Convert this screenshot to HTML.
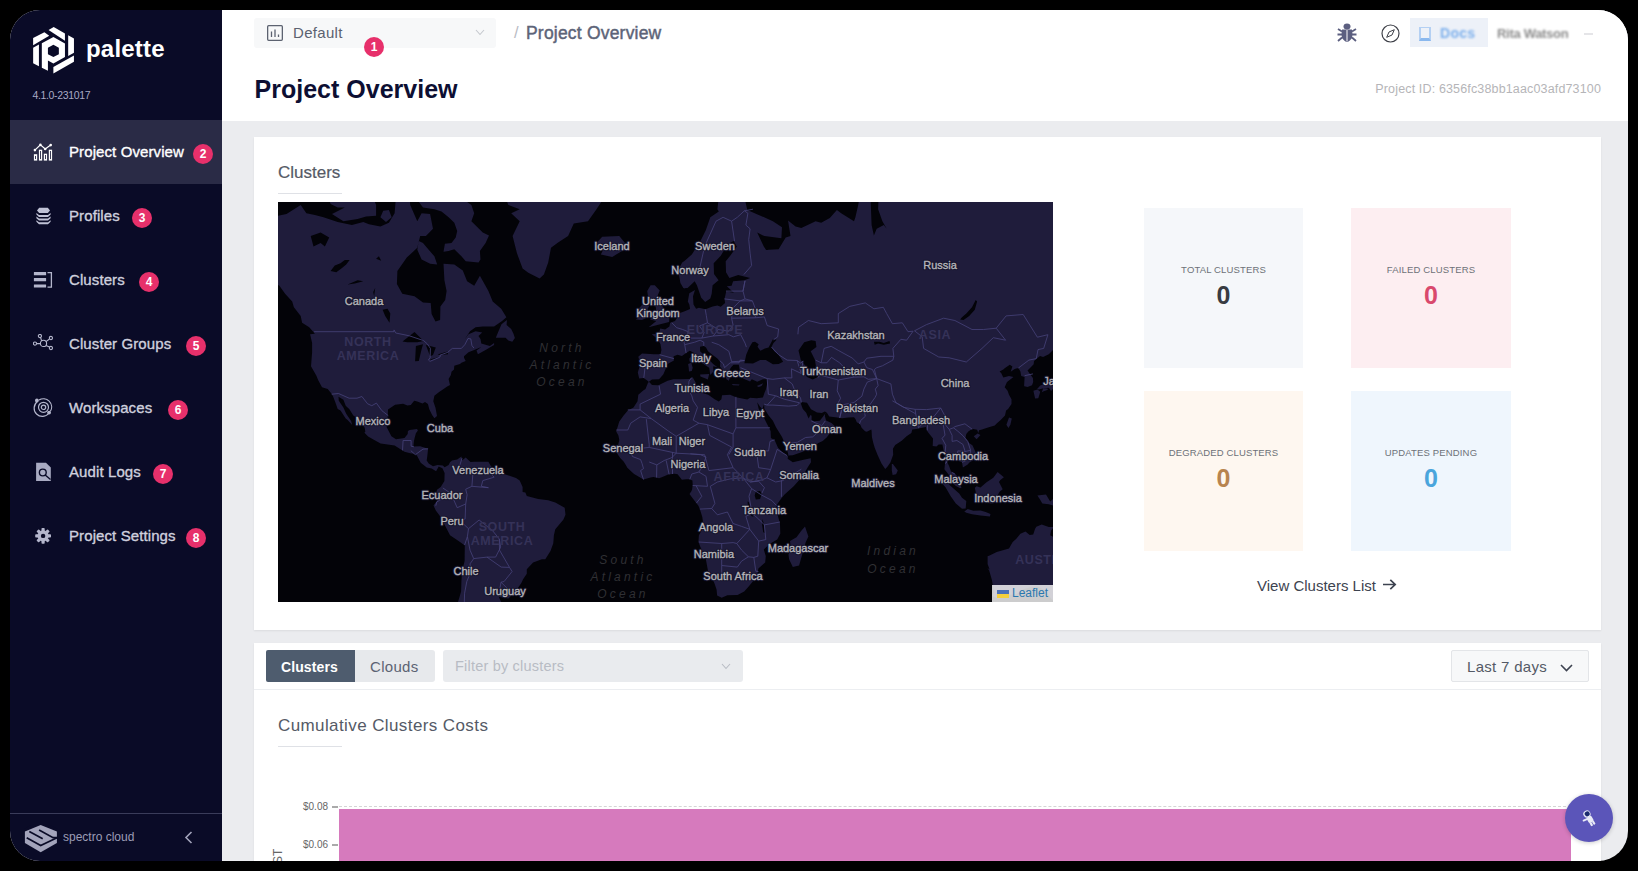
<!DOCTYPE html>
<html><head><meta charset="utf-8">
<style>
*{margin:0;padding:0;box-sizing:border-box}
html,body{width:1638px;height:871px;overflow:hidden;background:#000;font-family:"Liberation Sans",sans-serif}
.a{position:absolute}
#win{position:absolute;left:10px;top:10px;width:1618px;height:851px;border-radius:30px;overflow:hidden;background:#ebecef}
#side{position:absolute;left:0;top:0;width:212px;height:851px;background:#0a0b27}
#side .nav{position:absolute;left:0;width:212px;height:64px}
#side .nav.act{background:#2a2b46}
#side .nav .t{position:absolute;left:59px;top:0;line-height:64px;font-size:15px;color:#cfd0de;white-space:nowrap;letter-spacing:0.1px;-webkit-text-stroke:0.35px currentColor}
#side .nav.act .t{color:#fff}
#side .nav svg{position:absolute;left:23px;top:22px}
.badge{position:absolute;width:20px;height:20px;border-radius:50%;background:#e7306b;color:#fff;font-size:12px;font-weight:bold;text-align:center;line-height:20px}
#hdr{position:absolute;left:212px;top:0;width:1406px;height:111px;background:#fff}
.card{position:absolute;background:#fff;box-shadow:0 1px 2px rgba(0,0,0,0.07)}
.ct text{fill:#353258;font-size:12.5px;font-weight:bold;letter-spacing:0.6px}
.ot text{fill:#303034;font-size:12px;font-style:italic;letter-spacing:3.2px}
.lt text{fill:#b9b9bd;font-size:11px;stroke:#16142c;stroke-width:2.4px;stroke-linejoin:round}
.lt2 text{fill:#b5b5b9;font-size:11px;stroke:#b5b5b9;stroke-width:0.35px}
.tile{position:absolute;width:160px;height:160px;text-align:center}
.tile .l{position:absolute;left:0;width:100%;top:56px;font-size:9.5px;color:#6d7178;letter-spacing:0.15px}
.tile .n{position:absolute;left:0;width:100%;top:72.5px;font-size:25px;color:#333;font-weight:bold}
</style></head><body>
<div id="win">
 <div id="side">
  <svg class="a" style="left:18px;top:12px" width="52" height="56" viewBox="0 0 809 871"><g fill="#fff">
<polygon points="80,250 255,160 330,215 80,360"/>
<polygon points="320,125 400,78 575,180 575,290"/>
<polygon points="625,205 715,255 715,480 625,530"/>
<polygon points="395,700 715,520 715,620 395,800"/>
<polygon points="80,400 170,350 170,690 80,640"/>
<path fill-rule="evenodd" d="M215 330 L395 235 L575 335 L575 545 L395 645 L310 600 L310 760 L215 710 Z M395 355 L480 400 L480 500 L395 545 L310 500 L310 400 Z"/>
</g></svg>
  <div class="a" style="left:76px;top:25px;font-size:24px;font-weight:bold;color:#fff;letter-spacing:0.2px">palette</div>
  <div class="a" style="left:22.5px;top:78.5px;font-size:10.5px;color:#a9aac4;letter-spacing:-0.35px">4.1.0-231017</div>

  <div class="nav act" style="top:110px"><svg width="20" height="20" viewBox="0 0 20 20"><g fill="none" stroke="#fff" stroke-width="1.2"><path d="M1.9 8.1 L7.4 2.9 L12.2 7 L17.7 3.1"/><rect x="1.5" y="12.8" width="2.1" height="5.2"/><rect x="6.5" y="8.3" width="2.1" height="9.7"/><rect x="11.4" y="12.3" width="2.1" height="5.7"/><rect x="16.4" y="8.3" width="2.1" height="9.7"/></g><g fill="#fff"><circle cx="1.9" cy="8.1" r="1.3"/><circle cx="7.4" cy="2.9" r="1.3"/><circle cx="12.2" cy="7" r="1.3"/><circle cx="17.7" cy="3.1" r="1.3"/></g></svg><div class="t">Project Overview</div><div class="badge" style="left:183px;top:23.5px">2</div></div>
  <div class="nav" style="top:174px"><svg width="20" height="20" viewBox="0 0 20 20"><g fill="#c0c2d6"><path d="M6.2 1.8 H14.8 L17 4.4 L14.8 7 H6.2 L4 4.4 Z"/><path d="M3.4 7 L6 9 H15 L17.6 7 V8.6 L15 11 H6 L3.4 8.6 Z"/><path d="M3.4 10.6 L6 12.6 H15 L17.6 10.6 V12.2 L15 14.6 H6 L3.4 12.2 Z"/><path d="M3.4 14.2 L6 16.2 H15 L17.6 14.2 V15.8 L15 18.2 H6 L3.4 15.8 Z"/></g></svg><div class="t">Profiles</div><div class="badge" style="left:122px;top:23.5px">3</div></div>
  <div class="nav" style="top:238px"><svg width="20" height="20" viewBox="0 0 20 20"><g fill="#b4b6cc"><rect x="0.9" y="2" width="12.2" height="3.2" rx="0.3"/><rect x="0.9" y="8" width="12.2" height="3.2" rx="0.3"/><rect x="0.9" y="14.4" width="12.2" height="3.2" rx="0.3"/></g><path d="M14.5 2.6 H18.4 V17.2 H14.5" fill="none" stroke="#b4b6cc" stroke-width="1.3"/></svg><div class="t">Clusters</div><div class="badge" style="left:129px;top:23.5px">4</div></div>
  <div class="nav" style="top:302px"><svg width="20" height="20" viewBox="0 0 20 20"><g fill="none" stroke="#b4b6cc" stroke-width="1.1"><circle cx="10.5" cy="9.4" r="3.1"/><circle cx="2" cy="9.6" r="1.6"/><circle cx="6.9" cy="2" r="1.6"/><circle cx="17.9" cy="4" r="1.6"/><circle cx="17.9" cy="14" r="1.6"/><path d="M3.6 9.6 H7.4 M8.6 6.9 L7.6 3.5 M13 7.6 L16.5 5 M13 11.5 L16.5 13"/></g></svg><div class="t">Cluster Groups</div><div class="badge" style="left:176px;top:23.5px">5</div></div>
  <div class="nav" style="top:366px"><svg width="20" height="20" viewBox="0 0 20 20"><g fill="none" stroke="#b4b6cc" stroke-width="1.2"><path d="M4.5 3.6 A8.2 8.2 0 1 0 16 15"/><path d="M6 2.1 A8.2 8.2 0 0 1 17.4 13.3"/><circle cx="10.5" cy="9.3" r="5"/><circle cx="10.5" cy="9.3" r="2.2"/></g><g fill="#b4b6cc"><circle cx="3.9" cy="2.4" r="1.9"/><circle cx="16.1" cy="14.6" r="1.9"/></g></svg><div class="t">Workspaces</div><div class="badge" style="left:158px;top:23.5px">6</div></div>
  <div class="nav" style="top:430px"><svg width="20" height="20" viewBox="0 0 20 20"><path d="M3.1 0.8 H13 L17.8 5.6 V18.9 H3.1 Z" fill="#a9abc2"/><circle cx="9.8" cy="10.5" r="3.4" fill="none" stroke="#0a0b27" stroke-width="1.4"/><path d="M12.2 13 L17.5 17.5" stroke="#0a0b27" stroke-width="1.4"/></svg><div class="t">Audit Logs</div><div class="badge" style="left:143px;top:23.5px">7</div></div>
  <div class="nav" style="top:494px"><svg width="20" height="20" viewBox="0 0 20 20"><g fill="#b4b6cc" transform="translate(10.1 9.9)"><circle r="5.6"/><g id="teeth"><rect x="-1.6" y="-7.9" width="3.2" height="3.5" rx="0.8"/><rect x="-1.6" y="4.4" width="3.2" height="3.5" rx="0.8"/><rect x="-7.9" y="-1.6" width="3.5" height="3.2" rx="0.8"/><rect x="4.4" y="-1.6" width="3.5" height="3.2" rx="0.8"/></g><g transform="rotate(45)"><rect x="-1.6" y="-7.9" width="3.2" height="3.5" rx="0.8"/><rect x="-1.6" y="4.4" width="3.2" height="3.5" rx="0.8"/><rect x="-7.9" y="-1.6" width="3.5" height="3.2" rx="0.8"/><rect x="4.4" y="-1.6" width="3.5" height="3.2" rx="0.8"/></g><circle r="2.2" fill="#0a0b27"/></g></svg><div class="t">Project Settings</div><div class="badge" style="left:176px;top:23.5px">8</div></div>

  <div class="a" style="left:0;top:803px;width:212px;height:1px;background:#3a3c5a"></div>
  <svg class="a" style="left:14px;top:814px" width="34" height="30" viewBox="24 824 34 30"><polygon points="40.7,825 56.9,831.5 56.9,843 40.7,852.2 24.9,843 24.9,831.5" fill="#a3a4bb"/><g fill="none" stroke="#0a0b27" stroke-width="1.7" stroke-linecap="butt"><path d="M39.1 830 L53.1 837.7 L58 837.7"/><path d="M29.3 831.5 L42.7 838.8"/><path d="M26.7 837.7 L40.7 845.5 L57 837.7"/></g><path d="M24 829 L31 825 L24 825Z M58 829 L50 825 L58 825Z" fill="#0a0b27"/></svg>
  <div class="a" style="left:53px;top:820px;font-size:12px;color:#9c9db6">spectro cloud</div>
  <svg class="a" style="left:174px;top:821px" width="9" height="13" viewBox="0 0 9 13"><path d="M7.5 1 L2 6.5 L7.5 12" fill="none" stroke="#a3a4bb" stroke-width="1.6"/></svg>
 </div>

 <div id="hdr">
  <div class="a" style="left:32px;top:8px;width:242px;height:30px;background:#f7f8f9;border-radius:3px"></div>
  <svg class="a" style="left:45px;top:15px" width="16" height="16" viewBox="0 0 16 16"><g fill="none" stroke="#5c6270" stroke-width="1.3"><rect x="0.65" y="0.65" width="14.7" height="14.7" rx="1"/><path d="M4.5 12 V6.5 M8 12 V4.5 M11.5 12 V9.5"/></g></svg>
  <div class="a" style="left:71px;top:14px;font-size:15px;color:#5b6270;letter-spacing:0.3px">Default</div>
  <svg class="a" style="left:253px;top:19px" width="10" height="7" viewBox="0 0 10 7"><path d="M1 1 L5 5.5 L9 1" fill="none" stroke="#c5c8ce" stroke-width="1.1"/></svg>
  <div class="badge" style="left:142px;top:26.5px">1</div>
  <div class="a" style="left:292px;top:13px;font-size:16.5px;color:#b9bcc4">/</div>
  <div class="a" style="left:304px;top:12.5px;font-size:17.5px;color:#5d6478;-webkit-text-stroke:0.45px #5d6478;letter-spacing:0.2px">Project Overview</div>
  <div class="a" style="left:32.6px;top:64.7px;font-size:25px;color:#0d0f33;font-weight:bold">Project Overview</div>
  <div class="a" style="left:1153.3px;top:71.6px;font-size:12.5px;color:#b5b5b8;letter-spacing:0.15px">Project ID: 6356fc38bb1aac03afd73100</div>
  <svg class="a" style="left:1115px;top:13px" width="20" height="20" viewBox="0 0 20 20"><g fill="#5c5f80"><ellipse cx="10" cy="3.5" rx="3.5" ry="3"/><path d="M5 6.5 H15 Q16 12 15 15 Q12 19 10 19 Q8 19 5 15 Q4 12 5 6.5Z"/><path d="M1 6 L5 8.5 M19 6 L15 8.5 M0.5 11.5 H5 M19.5 11.5 H15 M1 18 L5 14.5 M19 18 L15 14.5" stroke="#5c5f80" stroke-width="1.8"/></g><path d="M10 7 V18.5" stroke="#fff" stroke-width="1"/></svg>
  <svg class="a" style="left:1159px;top:14px" width="19" height="19" viewBox="0 0 19 19"><circle cx="9.5" cy="9.5" r="8.5" fill="none" stroke="#3e4048" stroke-width="1.2"/><path d="M13.3 5.7 L11 11 L5.7 13.3 L8 8 Z" fill="none" stroke="#3e4048" stroke-width="1"/></svg>
  <div class="a" style="left:1188px;top:8px;width:78px;height:29px;background:#edf1f8"></div>
  <div class="a" style="left:1197px;top:17px;width:12px;height:14px;border:2.5px solid #b4d0f3;border-top-width:1px;border-bottom:3px solid #8ab8ee;filter:blur(0.5px)"></div>
  <div class="a" style="left:1218px;top:15px;font-size:14px;color:#7db0ec;font-weight:bold;filter:blur(0.8px);letter-spacing:0.3px">Docs</div>
  <div class="a" style="left:1275px;top:16px;font-size:13px;color:#8d8d8d;font-weight:bold;filter:blur(1px);letter-spacing:-0.3px">Rita Watson</div>
  <div class="a" style="left:1362px;top:23px;width:9px;height:2px;background:#e5e5e8"></div>
 </div>

 <div class="card" style="left:244px;top:127px;width:1347px;height:493px">
  <div class="a" style="left:24px;top:26px;font-size:17px;color:#555a66;-webkit-text-stroke:0.2px #555a66">Clusters</div>
  <div class="a" style="left:24px;top:56px;width:64px;height:1px;background:#dfe1e6"></div>
  <div class="a" style="left:24px;top:65px;width:775px;height:400px;overflow:hidden"><svg width="775" height="400" viewBox="0 0 775 400" style="display:block">
<rect width="775" height="400" fill="#030308"/>
<path d="M-39.9 75.4L-39.9 23.1L-14.3 9.6L-0.0 13.7L8.5 12.1L22.7 3.0L28.4 11.3L36.9 12.9L45.5 15.3L59.7 20.0L73.9 23.1L85.3 20.0L91.0 22.3L102.4 24.6L110.9 20.8L116.6 11.3L118.0 -5.8L122.3 -19.8L130.8 -19.8L132.2 3.0L139.3 19.2L143.6 11.3L152.1 12.1L155.0 26.8L147.9 34.1L142.2 34.1L139.3 45.8L128.8 55.6L119.4 69.0L118.9 82.1L124.3 91.7L136.5 94.3L145.0 100.4L152.7 100.9L153.6 112.0L157.5 119.5L162.1 118.1L162.4 104.4L167.2 97.9L168.6 89.1L166.4 78.2L165.5 61.8L176.3 62.4L184.8 68.4L189.1 79.3L196.2 83.7L201.9 73.7L210.4 89.1L214.7 99.4L223.2 106.8L228.4 115.3L224.1 119.0L216.1 124.4L204.8 124.4L197.6 125.3L192.0 129.2L186.8 137.3L190.5 132.3L197.6 129.2L204.2 130.5L200.5 134.0L202.5 136.9L203.3 141.5L211.9 143.9L216.1 141.1L216.1 143.1L207.6 148.0L199.9 152.3L198.5 148.4L203.3 145.1L196.2 148.0L190.5 150.3L186.0 154.3L186.0 155.8L187.7 158.9L183.4 160.8L182.0 161.9L176.3 163.8L176.0 167.5L173.5 169.7L172.9 173.0L170.6 176.9L172.0 182.9L169.2 184.6L164.9 187.4L161.5 189.8L159.2 191.5L156.4 193.8L155.3 199.2L157.5 205.7L159.0 214.0L156.4 216.2L154.1 213.1L151.3 207.3L149.9 202.1L147.0 200.1L144.5 201.5L139.3 199.5L136.2 198.8L132.8 203.1L129.4 203.4L125.1 201.8L117.1 202.8L110.0 207.6L109.8 213.4L108.6 224.9L113.4 234.3L118.0 237.3L126.5 236.1L129.7 231.9L129.9 228.9L131.7 228.0L139.0 227.1L139.9 228.6L137.9 231.3L136.5 236.4L135.9 239.4L135.4 244.5L142.2 244.2L150.1 246.8L149.3 254.2L148.7 258.5L150.7 261.4L155.0 264.3L159.5 263.1L164.9 263.4L166.6 265.2L170.6 263.1L172.0 260.3L174.0 258.5L179.2 257.6L183.4 254.5L184.3 258.5L183.4 259.1L187.7 255.6L192.5 260.0L196.2 259.7L204.8 259.7L210.4 259.7L213.9 265.7L221.3 270.6L229.8 273.2L238.0 276.0L241.7 278.6L244.6 284.9L244.6 290.0L247.4 290.6L248.8 294.0L260.2 297.1L270.2 298.3L277.3 300.5L286.7 305.7L287.5 312.8L285.3 317.7L277.3 327.3L275.9 333.2L275.3 341.2L272.5 349.0L267.3 357.3L263.9 357.3L255.1 360.4L248.8 367.3L248.8 371.7L245.1 377.2L243.2 381.2L237.5 389.5L230.4 396.4L226.9 396.0L220.7 394.7L223.2 399.9L224.7 414.3L176.3 414.3L177.7 403.4L179.2 402.7L183.1 389.5L183.4 379.5L184.0 369.8L186.6 359.1L186.8 343.6L182.0 340.0L172.0 333.2L167.5 324.4L162.1 314.3L157.8 308.5L155.5 303.4L159.2 298.5L156.7 296.3L159.0 287.7L162.7 284.9L166.4 278.9L166.6 270.9L164.4 266.3L160.7 264.6L158.1 269.2L153.6 266.6L148.7 265.4L142.7 260.8L139.3 254.2L137.6 252.1L132.2 251.2L126.5 249.8L123.7 248.0L116.6 243.6L102.6 241.5L96.7 238.2L90.1 234.6L86.4 230.7L87.3 229.8L86.7 225.8L84.2 222.1L79.6 216.5L75.3 213.4L71.4 207.3L67.7 203.7L65.4 197.8L60.5 194.8L60.8 198.8L65.4 205.4L68.2 211.8L73.1 219.0L74.2 223.1L69.6 218.1L67.7 216.5L62.5 208.6L59.7 207.0L57.4 200.5L55.1 194.5L53.4 191.5L49.7 187.1L44.0 185.3L40.1 178.0L38.4 173.7L33.0 164.2L33.5 158.1L34.1 150.3L34.1 141.1L32.1 132.3L36.9 131.8L31.2 125.3L24.1 120.8L22.7 113.9L15.9 105.3L14.2 99.4L7.1 91.7L1.4 83.7L-4.3 81.0L-39.9 75.4ZM48.3 -10.3L52.6 2.1L59.7 5.5L66.8 5.5L54.0 12.1L65.4 19.2L79.6 16.9L88.1 14.5L98.1 13.7L98.1 3.0L91.0 -15.0ZM102.4 15.3L108.0 20.0L113.7 15.3L110.9 8.0L105.2 8.8ZM139.3 47.8L143.6 57.5L152.1 61.8L159.2 62.4L156.4 54.3L150.7 47.8L145.0 41.1L140.8 39.0ZM125.1 -29.8L130.8 -19.8L136.5 -5.8L145.0 5.5L156.4 7.2L163.5 9.6L170.6 15.3L176.3 20.8L179.2 29.0L177.7 35.5L173.5 41.1L166.9 41.8L165.5 49.8L170.6 49.1L176.3 47.2L183.4 54.3L187.7 59.3L200.5 60.6L202.5 57.5L201.9 49.1L207.6 41.1L211.0 33.4L204.8 30.5L193.4 19.2L196.2 11.3L193.4 3.0L184.8 -3.1L170.6 -29.8ZM216.1 -29.8L224.7 -10.3L230.4 3.0L241.7 7.2L233.2 11.3L241.7 19.2L234.6 34.1L238.9 51.1L244.6 66.6L250.3 70.8L261.6 76.5L265.9 72.5L270.2 60.6L273.0 45.8L280.1 40.4L290.1 34.1L295.8 21.5L310.0 19.2L318.5 7.2L324.2 -1.4L329.9 -29.8ZM318.5 41.1L324.2 34.8L341.3 34.1L347.0 41.1L344.1 49.1L334.2 54.9L322.8 52.4L324.8 48.5L318.5 45.2ZM217.8 135.7L220.7 128.8L223.5 122.2L228.9 118.1L228.6 123.1L233.2 127.0L235.5 131.8L236.9 136.1L234.3 139.8L230.4 138.6L227.5 135.7L223.2 135.7ZM443.7 -29.8L439.4 7.2L440.8 9.6L432.3 15.3L427.8 28.3L423.2 37.6L418.1 45.8L413.8 52.4L406.7 58.7L404.2 60.6L401.0 66.6L401.0 73.1L402.4 81.0L402.7 81.5L405.3 85.9L406.7 86.4L409.6 85.9L411.3 91.2L409.8 99.4L411.3 102.4L412.1 106.8L411.5 107.3L406.7 109.2L400.5 111.6L399.6 114.9L397.0 119.0L392.2 120.8L391.4 124.4L387.1 127.5L382.2 126.6L381.1 131.4L373.7 132.3L379.7 136.9L382.5 142.3L383.4 148.0L382.5 152.3L376.0 152.3L364.0 151.5L360.3 154.7L361.8 160.0L361.2 165.7L359.8 170.4L361.2 176.6L365.5 175.9L368.9 178.3L370.9 180.1L370.0 180.8L367.5 187.1L365.2 188.4L360.3 192.8L359.5 199.2L355.5 205.4L349.8 208.6L345.6 213.4L341.3 219.6L338.2 229.5L340.4 233.4L341.3 237.9L339.9 243.9L337.0 247.7L339.0 251.2L342.4 256.2L345.6 259.4L347.8 262.9L349.3 265.7L354.1 270.3L356.1 272.0L365.5 277.5L372.6 275.5L375.4 274.9L381.1 276.3L386.2 274.3L390.2 272.6L396.5 271.8L399.6 272.3L403.9 277.8L408.1 277.2L411.0 277.2L414.4 278.6L414.7 282.9L414.1 287.2L413.5 288.9L411.5 292.0L415.2 297.1L420.4 303.7L421.8 307.1L424.3 315.1L425.2 321.5L424.9 326.1L420.9 333.2L420.4 340.0L422.4 345.1L427.8 356.9L430.0 368.9L433.7 375.0L436.6 381.8L438.6 387.8L439.1 393.6L443.7 395.7L449.4 393.3L459.6 392.9L466.2 389.5L470.7 384.5L475.0 379.2L479.0 374.6L480.4 366.6L487.2 360.4L487.8 354.2L485.8 347.5L491.5 342.1L499.2 337.6L502.3 331.7L502.0 321.5L498.6 309.4L498.3 304.2L499.7 301.4L502.9 297.1L506.3 292.8L515.7 284.3L521.9 277.2L526.2 271.5L530.4 264.3L533.0 260.3L532.7 256.2L526.7 257.6L514.8 260.3L510.0 257.1L509.7 256.8L510.0 254.2L510.5 253.6L514.8 253.3L524.8 249.8L526.5 248.3L535.3 245.1L540.4 240.9L544.7 239.1L548.9 235.2L556.9 224.3L553.5 220.9L548.1 218.4L546.9 214.3L546.9 212.1L548.9 210.8L551.2 214.6L559.2 215.6L564.0 216.2L570.3 215.6L576.0 215.3L577.4 217.1L578.8 220.3L581.6 221.8L583.1 224.3L583.1 224.9L584.8 227.1L587.0 229.2L588.8 229.8L593.3 227.4L593.6 228.9L593.9 234.9L595.3 240.9L596.7 245.7L599.6 253.0L603.5 261.4L607.2 266.9L609.2 264.9L612.4 260.5L615.2 252.7L614.9 246.8L617.2 243.0L623.7 238.8L628.6 234.3L633.4 231.0L634.3 227.4L638.5 227.1L642.8 226.1L647.9 224.9L648.5 227.7L650.2 230.4L651.0 231.6L655.0 236.4L654.7 243.9L658.4 244.5L660.7 242.4L664.4 242.4L665.6 248.3L667.3 255.6L667.0 261.4L666.4 267.2L669.8 271.5L672.1 274.6L674.1 280.0L677.5 283.7L682.1 286.3L683.5 285.7L681.2 280.0L680.9 279.2L678.4 272.9L677.5 272.3L674.9 270.3L673.0 269.5L671.0 263.7L669.0 260.0L671.0 253.6L672.7 251.2L674.9 253.6L677.8 255.0L679.8 258.5L684.0 260.3L684.9 265.4L689.7 262.6L691.4 260.5L696.6 257.6L697.4 255.6L697.4 255.0L697.7 250.4L694.6 243.6L691.2 240.9L687.5 235.8L688.3 231.9L690.3 229.5L692.6 228.0L695.4 227.1L699.1 227.7L700.3 231.0L701.1 228.3L704.0 227.4L711.6 224.9L716.8 223.4L718.7 221.5L722.7 218.1L727.0 213.4L728.1 208.6L730.1 207.0L733.5 202.1L733.5 197.2L731.0 192.8L729.6 188.8L726.7 185.3L729.0 180.1L735.5 175.1L731.0 174.1L725.3 175.5L723.3 171.2L721.6 169.4L725.3 167.5L727.0 166.0L731.8 162.7L734.4 164.5L732.7 169.7L736.7 167.1L740.4 166.0L742.4 169.4L743.2 174.1L746.6 175.1L746.1 183.6L746.3 184.3L749.5 185.0L754.0 183.3L755.2 180.1L754.9 175.9L749.5 168.6L752.3 165.7L755.7 162.3L756.0 158.9L762.0 153.9L765.1 155.0L770.8 152.3L776.5 146.4L782.2 138.2L786.4 131.8L787.9 116.2L813.5 116.2L813.5 -29.8L585.9 -29.8L580.2 3.0L577.4 15.3L576.0 19.2L563.2 11.3L558.9 8.0L551.8 16.1L543.2 20.8L537.6 19.2L523.3 26.1L517.6 24.6L510.0 18.4L512.5 34.1L507.7 35.5L500.6 47.2L490.6 47.8L486.4 48.5L490.6 51.7L485.8 44.5L479.2 30.5L486.4 34.1L503.4 36.2L504.0 25.3L494.9 19.2L480.7 12.9L469.3 8.0L460.8 -29.8ZM370.6 125.3L391.1 119.9L391.6 113.0L387.4 109.2L382.5 100.9L381.1 96.9L378.3 96.9L381.7 88.6L376.8 83.2L372.6 83.2L369.2 89.1L370.9 100.4L372.9 102.9L377.7 104.4L378.3 110.1L373.4 111.6L374.9 114.9L372.0 117.6L378.3 119.0ZM369.7 115.3L369.7 106.8L371.2 103.9L366.0 100.4L362.6 104.4L358.4 109.2L359.8 116.2L357.5 117.6L364.0 118.1ZM422.1 172.6L431.2 171.9L429.8 177.6L427.5 176.6L422.4 174.4ZM410.1 161.9L413.3 160.8L414.7 165.7L413.8 169.0L411.0 169.4L410.7 165.7ZM411.3 156.6L413.5 154.3L414.1 157.7L413.0 160.4L411.5 159.3ZM453.6 181.9L461.6 182.6L460.8 183.6L455.1 183.3ZM478.7 184.0L485.2 181.2L483.5 184.0L480.7 185.0ZM527.0 324.4L530.4 334.6L527.6 340.6L521.1 363.5L514.8 365.1L511.1 357.3L510.5 352.6L512.8 346.6L512.0 339.1L518.5 335.2L523.3 328.8ZM613.8 262.0L614.9 262.0L619.8 268.6L618.1 272.3L614.6 272.9L613.8 268.6ZM731.0 215.6L733.8 216.5L732.4 222.7L730.4 226.1L728.4 222.7ZM695.7 234.3L699.7 231.6L702.5 233.1L698.6 237.3ZM755.4 188.8L759.4 187.4L762.3 189.8L760.3 196.2L757.1 196.5L756.0 191.5ZM763.7 190.5L765.1 186.4L769.4 186.4L769.9 187.7L765.1 189.4ZM759.1 187.1L762.3 183.6L766.5 181.9L772.2 181.5L775.9 175.9L779.3 173.7L785.0 163.8L789.3 160.0L790.7 169.4L787.9 178.3L787.3 182.6L784.2 183.6L777.9 185.0L775.9 186.0L773.1 189.1L770.8 185.7L764.5 186.4L760.8 187.4ZM657.9 274.0L664.1 275.2L672.4 283.7L681.2 291.4L684.0 295.7L688.3 299.1L687.7 306.5L684.0 306.8L677.8 301.4L672.7 294.3L667.5 285.2L662.7 280.0ZM686.3 309.4L689.7 307.1L695.4 308.8L702.5 308.5L707.7 310.0L712.5 312.0L711.9 314.6L702.5 313.4L694.0 312.3L688.3 310.8ZM696.8 285.7L698.6 284.3L702.5 285.4L708.2 280.6L715.3 275.8L719.6 270.0L725.9 275.2L722.4 278.0L721.0 280.0L724.7 287.2L721.6 289.7L718.2 295.7L716.8 301.1L712.5 301.4L704.0 299.4L700.3 298.3L698.0 291.4ZM709.6 354.2L711.6 353.6L718.7 349.9L731.0 346.6L734.7 340.0L738.1 337.0L742.4 331.7L747.5 329.6L751.7 332.9L755.2 332.6L757.1 326.7L758.3 324.7L763.7 322.4L770.8 325.0L775.9 325.0L773.1 328.5L772.2 333.2L785.0 340.6L790.7 320.6L813.5 348.1L813.5 414.3L776.5 399.9L772.5 395.7L768.0 388.9L760.0 384.5L753.7 384.8L745.2 387.2L738.1 392.6L727.8 392.9L721.0 396.7L713.9 394.0L715.9 390.6L713.9 377.9L711.1 368.2L709.4 366.0L711.6 367.6L709.6 361.9ZM759.4 293.4L768.0 292.6L772.2 299.4L777.9 294.3L787.9 297.4L799.2 301.4L807.8 312.8L793.6 315.7L787.9 316.3L779.3 313.7L777.9 304.2L770.8 302.2L764.3 301.4L762.3 298.0Z" fill="#1f1c3b" stroke="none"/>
<path d="M370.9 179.8L374.0 177.6L381.1 177.3L385.4 172.3L387.4 167.5L389.6 161.9L395.9 158.5L395.6 154.3L399.6 152.7L403.9 153.9L408.1 151.1L411.8 148.8L415.8 150.7L416.7 154.7L421.5 159.3L426.6 162.7L431.2 165.7L432.3 173.0L435.4 169.4L435.2 164.2L439.4 165.3L435.2 161.9L431.2 158.1L426.6 153.5L422.1 149.2L422.1 144.7L425.8 143.9L428.0 145.6L430.0 149.2L433.7 152.3L439.4 156.6L442.3 160.0L442.0 164.5L444.3 167.5L446.8 171.9L448.5 177.3L450.8 178.7L452.2 174.8L455.1 172.3L451.7 167.5L453.4 164.9L455.6 162.7L460.8 162.7L461.6 167.5L463.6 173.0L465.0 176.6L467.3 177.6L472.1 179.4L473.8 177.3L479.2 179.8L484.9 177.3L489.5 177.3L488.9 182.9L487.8 187.7L486.6 190.5L484.9 195.5L478.7 196.2L472.1 195.8L469.3 197.5L457.9 195.2L452.2 192.8L444.0 193.2L443.4 197.2L440.8 199.5L436.6 197.2L430.3 192.8L423.8 190.8L418.7 189.8L415.8 187.1L418.1 181.5L415.8 177.3L414.7 175.5L411.3 176.9L401.0 177.3L395.3 177.3L389.6 178.7L384.0 181.5L380.5 183.3L374.0 182.9L371.7 180.5ZM466.4 161.2L468.2 152.7L471.3 145.6L474.4 140.2L477.0 139.8L480.7 142.3L479.5 144.7L482.4 148.8L486.9 146.4L490.6 145.6L494.9 137.3L498.6 137.8L495.5 141.1L493.5 145.1L496.3 149.2L500.6 152.7L505.1 159.7L500.6 161.9L494.9 162.3L487.8 158.1L482.1 158.1L475.0 161.5L469.6 161.2ZM520.5 148.4L526.2 140.2L533.3 138.2L537.6 139.0L538.4 145.1L532.7 149.2L537.0 158.1L538.1 165.7L540.4 174.8L534.7 177.6L529.0 175.1L526.2 171.2L527.9 164.5L522.8 158.1ZM479.2 200.5L480.7 207.0L484.1 211.8L487.8 219.6L492.6 228.9L492.9 236.1L496.6 237.9L500.0 245.7L504.8 250.4L510.0 254.2L510.5 253.6L508.3 244.8L504.0 234.9L498.0 225.2L494.9 218.7L490.6 213.4L486.4 206.7L486.1 202.1L484.4 207.0L482.1 204.7L479.5 200.8ZM523.3 200.1L529.0 200.8L531.0 204.1L533.0 207.3L539.0 210.5L543.8 211.1L546.9 209.5L548.9 210.8L546.9 212.1L544.7 214.9L541.8 218.7L536.1 219.3L533.6 218.1L533.6 213.7L532.4 213.1L530.7 216.5L529.6 214.3L528.2 210.8L524.8 207.0L523.0 202.1ZM406.7 86.4L409.6 85.9L416.7 79.3L418.9 83.2L420.9 89.1L423.2 95.8L427.2 99.9L432.3 96.4L433.7 91.7L434.6 83.2L440.6 78.2L436.0 71.9L435.7 61.2L442.8 53.7L449.4 42.5L455.6 39.0L458.8 44.5L452.2 53.7L447.7 59.3L448.0 70.2L451.4 75.9L460.2 73.1L472.1 75.9L466.4 78.2L455.1 79.3L453.6 83.7L448.8 84.3L455.9 90.7L448.2 89.6L446.5 96.9L447.1 100.9L442.8 104.8L439.4 103.4L434.6 104.4L427.5 107.3L420.9 105.8L418.1 106.8L415.5 102.4L415.0 94.3L417.0 88.0L411.3 91.2ZM591.6 -29.8L593.0 7.2L593.6 23.1L595.9 33.4L598.7 26.8L605.8 23.1L608.7 26.8L604.4 19.2L600.1 7.2L601.6 -29.8ZM595.9 139.8L601.6 139.8L605.8 141.1L611.5 139.0L612.1 141.5L605.8 142.7L600.1 141.5L596.7 142.7ZM682.1 117.6L685.5 118.1L691.2 113.9L696.8 107.8L699.1 99.4L697.7 97.9L694.0 105.3L688.3 111.6L684.0 115.3ZM477.8 289.4L482.1 289.1L483.8 291.4L482.1 297.1L477.8 297.4L476.7 293.4ZM469.6 299.4L470.7 300.0L474.1 311.4L475.5 314.8L473.6 314.3L470.1 308.5ZM484.4 317.1L485.8 321.5L486.9 331.1L485.2 330.2L484.1 322.9ZM32.7 34.1L42.6 30.5L51.2 35.5L46.9 44.5L42.6 41.1L35.5 44.5ZM52.6 69.0L56.8 63.6L62.5 61.2L66.8 58.1L71.6 58.1L68.2 62.4L64.0 66.0L58.3 70.2ZM69.6 82.6L79.6 78.2L85.3 79.3L76.8 81.5ZM95.2 90.1L97.2 85.9L96.1 94.3ZM98.1 56.8L100.9 54.3L103.2 58.7ZM104.6 107.8L109.5 106.8L112.3 111.6L111.5 120.8L107.2 113.9ZM124.5 139.4L136.5 130.1L145.6 139.0L139.3 140.2L129.4 140.2ZM137.1 159.3L140.8 158.9L143.6 147.2L145.0 142.3L137.9 143.9ZM147.9 143.1L157.8 145.6L155.0 153.1L152.1 154.3ZM149.6 159.3L162.1 155.0L162.4 154.7L153.6 157.0ZM159.8 153.1L170.1 152.3L169.5 149.6L161.0 151.9Z" fill="#030308"/>
<path d="M422.1 172.6L431.2 171.9L429.8 177.6L427.5 176.6L422.4 174.4ZM410.1 161.9L413.3 160.8L414.7 165.7L413.8 169.0L411.0 169.4L410.7 165.7ZM411.3 156.6L413.5 154.3L414.1 157.7L413.0 160.4L411.5 159.3ZM453.6 181.9L461.6 182.6L460.8 183.6L455.1 183.3ZM478.7 184.0L485.2 181.2L483.5 184.0L480.7 185.0Z" fill="#1f1c3b"/>
<path d="M36.1 129.7L116.0 129.7L116.0 127.9L117.7 131.0L128.0 133.1L131.9 134.0L145.6 138.6L149.3 141.9L152.4 146.4L152.1 155.8L150.4 158.1L152.1 159.3L162.1 155.0L162.1 153.1L169.8 150.3L174.3 146.4L183.4 146.4L186.8 142.7L190.0 136.5L192.8 136.9L193.9 143.5L195.9 146.0M53.7 192.2L60.5 191.5L71.1 196.2L79.0 196.2L83.9 194.5L89.6 201.8L93.8 203.7L98.4 201.1L103.8 208.6L110.3 213.7M124.5 248.3L125.1 238.5L128.0 238.5L133.1 238.5L133.1 244.2L135.9 244.8M132.8 248.6L137.3 252.7L145.0 247.1L150.1 246.8M184.0 256.2L180.6 267.2L194.8 272.6L193.9 284.3L187.7 287.2L189.1 292.8L187.7 302.0L179.2 305.7L172.9 291.4L164.9 286.0M211.9 265.7L213.9 272.9L216.1 275.2L204.8 278.6L203.3 284.3L210.4 285.7L193.9 284.3M172.9 291.4L158.7 300.0L157.8 303.7M187.7 302.0L187.1 317.1L180.6 317.4L190.5 326.7L189.4 334.6L186.6 343.0M190.5 326.7L201.1 318.0L214.7 328.8L221.3 337.0L222.7 345.1L217.6 355.1L209.0 355.1L195.7 356.6L192.0 348.1L189.4 334.6M195.7 356.6L192.0 361.9L192.8 369.8L188.8 379.5L186.6 391.2L186.3 399.9L184.8 407.0M221.3 337.0L221.5 348.1L231.5 365.4L234.1 369.5L226.1 379.5L223.0 380.2L234.9 391.9M209.0 355.1L223.2 365.1L231.5 365.4M221.3 389.9L223.0 380.2M381.7 152.7L395.9 156.6M361.2 158.5L369.2 159.7L366.9 166.8L365.8 175.9M393.9 120.8L398.7 125.7L404.7 127.5L410.1 129.7L408.4 135.7L406.1 140.7L406.7 142.7L408.1 151.1M427.2 107.3L428.3 113.5L429.5 120.8L421.5 124.0L426.1 130.5L423.8 136.1L414.1 136.1L408.4 135.7M406.7 142.7L416.7 140.2L422.1 138.2L425.8 140.2L425.8 143.9M429.5 120.8L440.3 127.5L450.8 129.2L455.1 123.1L453.6 116.2L454.5 111.1L453.6 107.3L451.7 104.8M423.8 136.1L435.2 134.0L440.3 127.5M435.2 134.0L450.8 132.7L455.4 134.8L462.7 132.7L467.0 141.1L468.4 145.1M433.7 140.2L440.8 142.7L450.8 149.2L451.9 153.1L453.6 159.7L461.6 159.3L466.4 158.5M442.0 158.9L445.4 161.9L446.5 165.7L452.2 160.8L461.0 160.8M448.0 89.1L465.0 89.1L467.0 78.8M446.5 96.9L462.2 98.9L467.0 96.9M453.6 107.3L462.2 98.9L474.4 98.9L477.8 107.8L477.3 115.8L453.6 116.2M466.4 8.8L469.9 11.3L467.9 23.1L472.1 26.8L470.7 37.6L472.1 51.1L473.6 63.6L465.9 72.5M445.1 15.3L453.6 19.2L459.3 15.3L466.4 8.8L475.0 7.2M420.9 69.6L426.6 44.5L438.0 19.2L445.1 15.3M453.6 19.2L456.5 39.0M467.0 78.8L465.0 89.1L467.0 96.9L474.4 98.9M477.3 115.8L486.4 114.9L489.2 123.5L500.6 127.0L499.7 134.8L495.5 137.8M493.5 145.1L500.6 152.7L509.1 158.1L519.1 158.5L522.8 161.2L525.0 158.9M461.0 160.8L462.2 158.1L466.4 158.5M462.5 165.7L489.2 176.6L494.9 177.3L506.3 175.9L513.9 175.9L513.4 166.8M489.2 176.6L490.3 192.2L497.7 193.8L506.3 197.2L521.6 200.8M486.1 202.1L489.2 203.1L497.7 193.8M489.2 203.1L494.9 203.1L510.5 204.1L519.1 203.4L521.6 200.8M506.3 175.9L514.2 181.9L517.6 190.5L522.5 195.8L523.3 200.5M513.4 166.8L523.3 171.5L525.0 158.9M519.1 158.5L523.3 171.5M509.1 241.5L519.4 240.3L527.6 235.5L534.7 234.9L545.2 225.8M533.3 219.0L543.8 223.7L547.2 219.0M561.7 215.9L564.6 205.4L560.0 201.1L562.6 196.2L559.2 188.8L560.3 178.0M560.3 178.0L541.8 173.0L540.1 175.5M519.9 132.3L520.5 125.3L530.4 118.5L543.2 121.7L560.3 120.8L560.3 111.6L571.7 104.4L587.3 100.9L595.9 106.8L605.3 105.3L608.7 111.6L614.4 121.7L624.3 120.8L630.0 129.7L635.1 129.2M635.1 129.2L628.6 138.2L622.9 137.3L614.9 146.4L615.8 154.3L603.0 154.3L588.8 156.2L585.9 160.0L580.2 161.9L574.5 156.2L560.3 148.4L553.2 144.3L546.1 146.4L543.2 160.8L537.6 158.1M543.2 160.8L548.9 160.8L553.5 155.4L557.5 158.1L561.7 160.8L570.3 170.1L576.0 175.1L585.9 174.8L590.2 177.3L598.7 176.6M585.9 160.0L588.8 165.7L594.4 167.5L598.7 176.6M615.8 154.3L614.9 158.1L604.4 163.8L598.7 165.7L596.4 167.5L598.7 176.6M560.3 178.0L576.0 175.1M598.7 176.6L589.3 180.1L585.9 187.1L583.9 194.2L576.0 200.5L564.6 202.8L561.7 215.9M598.7 176.6L600.1 183.6L597.3 187.1L598.7 192.2L597.0 195.5L588.8 207.0L586.5 210.2L587.3 214.3L582.5 218.7L581.6 221.8M598.7 176.6L612.9 181.9L614.4 192.2L617.8 200.5L625.7 205.4L637.1 207.3L648.5 207.6L662.7 206.0L667.5 214.9L664.7 219.6L671.2 227.4L675.5 225.8L676.9 224.6L686.9 221.8L694.0 227.1M614.4 198.8L637.7 211.8L637.1 207.3M637.7 211.8L640.5 225.8L649.9 216.5L649.3 228.3M649.9 216.5L655.6 214.9L662.7 206.0M664.7 219.6L667.0 233.1L664.1 236.4L667.8 243.3L667.0 251.2L669.0 260.3L667.0 261.4M671.2 227.4L674.1 233.4L674.1 239.4L678.9 238.5L684.9 242.4L687.2 249.5L679.8 248.9L679.2 255.6M675.5 225.8L679.8 229.2L684.9 233.7L689.7 239.4L692.6 248.3L692.6 253.3L688.3 258.5L684.0 260.3M687.2 249.5L692.6 248.3M674.1 270.6L676.9 272.0M636.5 128.8L648.5 122.6L665.6 116.2L676.9 118.5L694.0 127.5L705.4 127.5L718.2 126.2L727.6 138.2L715.3 135.7L704.0 146.4L688.3 160.0L671.2 155.8L660.7 155.0L645.6 146.4L644.2 134.8L636.5 128.8M718.2 126.2L728.1 113.9L745.2 112.5L759.4 135.2L769.9 132.7L765.7 146.4L760.0 147.6L758.3 156.6M740.4 166.0L750.9 158.1L758.3 156.6M746.6 173.7L754.9 171.9M362.1 207.9L373.1 216.5L390.2 228.9L398.2 234.3L420.9 221.2L429.5 222.7L455.1 231.9L457.9 225.8L457.9 194.8M349.8 207.9L362.1 207.9L362.1 202.1L382.5 192.2L381.1 183.6M338.4 228.0L349.8 228.0L352.7 221.2L362.1 214.9L373.1 216.5M352.7 247.4L371.2 245.4L371.2 242.4L368.3 217.1M413.8 175.5L411.0 179.1L410.1 187.1L413.8 193.8L415.2 198.8L419.5 205.4L415.2 218.1L420.9 221.2M457.9 225.8L492.0 225.8M398.2 234.3L398.2 251.2L426.6 252.7L430.9 268.6L455.1 265.7L465.0 275.8L472.1 280.0L483.5 278.0L488.9 275.8L497.7 280.0L504.8 278.6L509.1 276.0L523.3 267.2M429.5 222.7L431.7 233.4L453.6 245.1L449.4 252.7L455.1 265.7M455.1 231.9L455.1 245.1L450.8 252.7M371.2 245.4L398.2 251.2M352.7 247.4L354.4 254.5L362.6 257.6L364.0 261.4L365.5 266.6L362.6 268.6L365.5 277.5M371.2 260.0L378.8 262.9L386.2 258.5L393.9 255.6L398.2 251.2M378.8 262.9L378.6 275.5M388.2 258.5L391.1 272.3M394.5 250.4L394.5 272.0M412.4 251.8L422.4 252.7L428.0 255.0L425.2 262.9L420.9 270.0L413.8 272.0L411.8 277.2M420.9 270.0L428.0 274.3L429.5 284.3L418.1 283.7L414.7 283.5M432.3 284.3L439.4 280.0L452.2 276.9L465.0 275.8M418.1 283.7L423.8 294.3L418.4 301.1M432.3 284.3L436.9 301.4L433.7 306.5L421.8 307.1M465.0 275.8L473.6 286.6L471.0 294.3L474.1 311.4L467.9 314.3L471.8 327.3L463.6 324.4L455.1 321.5L449.4 327.3L420.9 327.3M433.7 306.5L439.4 312.8L449.4 310.0L455.1 321.5M473.6 286.6L483.2 292.8L493.8 298.5L498.3 303.4M472.1 280.0L480.7 279.2L486.4 285.7L483.8 291.4M503.4 294.8L503.4 278.6L509.1 276.0M488.9 275.8L492.6 267.5L499.2 247.4L509.1 253.6M492.6 267.5L480.7 265.7L479.2 254.7L483.5 248.9L490.6 248.9L492.0 239.4L496.6 237.9M474.1 311.4L480.7 317.1L486.4 322.9L502.0 320.0M486.4 322.9L487.8 337.6L480.7 339.1L479.8 354.2L475.8 355.4L477.8 369.2L480.4 369.5M420.9 340.0L443.7 341.5L455.1 340.6L458.8 341.5L471.8 327.3L480.7 339.1M443.7 341.5L443.7 354.2L443.7 363.5L443.7 374.3L435.2 375.3M443.7 363.5L459.3 365.1L463.6 359.1L470.4 354.8L475.8 355.4M458.8 341.5L463.6 348.1L470.4 354.8" fill="none" stroke="#46427a" stroke-width="0.8" stroke-linejoin="round"/>
<g font-family="Liberation Sans, sans-serif" text-anchor="middle">
<g class="ct"><text x="90" y="144" class="k">NORTH</text><text x="90" y="158" class="k">AMERICA</text><text x="437" y="132" class="k">EUROPE</text><text x="657" y="137" class="k">ASIA</text><text x="461" y="279" class="k">AFRICA</text><text x="224" y="329" class="k">SOUTH</text><text x="224" y="343" class="k">AMERICA</text><text x="765" y="362" class="k">AUSTRA</text></g>
<g class="ot"><text x="284" y="150" class="o">North</text><text x="284" y="167" class="o">Atlantic</text><text x="284" y="184" class="o">Ocean</text><text x="345" y="362" class="o">South</text><text x="345" y="379" class="o">Atlantic</text><text x="345" y="396" class="o">Ocean</text><text x="615" y="353" class="o">Indian</text><text x="615" y="371" class="o">Ocean</text></g>
<g class="lt"><text x="334" y="48" class="c">Iceland</text><text x="437" y="48" class="c">Sweden</text><text x="412" y="72" class="c">Norway</text><text x="662" y="67" class="c">Russia</text><text x="86" y="103" class="c">Canada</text><text x="380" y="103" class="c">United</text><text x="380" y="115" class="c">Kingdom</text><text x="467" y="113" class="c">Belarus</text><text x="395" y="139" class="c">France</text><text x="578" y="137" class="c">Kazakhstan</text><text x="375" y="165" class="c">Spain</text><text x="423" y="160" class="c">Italy</text><text x="555" y="173" class="c">Turkmenistan</text><text x="454" y="175" class="c">Greece</text><text x="677" y="185" class="c">China</text><text x="414" y="190" class="c">Tunisia</text><text x="511" y="194" class="c">Iraq</text><text x="541" y="196" class="c">Iran</text><text x="394" y="210" class="c">Algeria</text><text x="438" y="214" class="c">Libya</text><text x="472" y="215" class="c">Egypt</text><text x="579" y="210" class="c">Pakistan</text><text x="95" y="223" class="c">Mexico</text><text x="162" y="230" class="c">Cuba</text><text x="549" y="231" class="c">Oman</text><text x="643" y="222" class="c">Bangladesh</text><text x="345" y="250" class="c">Senegal</text><text x="384" y="243" class="c">Mali</text><text x="414" y="243" class="c">Niger</text><text x="472" y="254" class="c">Sudan</text><text x="522" y="248" class="c">Yemen</text><text x="685" y="258" class="c">Cambodia</text><text x="200" y="272" class="c">Venezuela</text><text x="410" y="266" class="c">Nigeria</text><text x="521" y="277" class="c">Somalia</text><text x="595" y="285" class="c">Maldives</text><text x="678" y="281" class="c">Malaysia</text><text x="164" y="297" class="c">Ecuador</text><text x="720" y="300" class="c">Indonesia</text><text x="174" y="323" class="c">Peru</text><text x="486" y="312" class="c">Tanzania</text><text x="438" y="329" class="c">Angola</text><text x="436" y="356" class="c">Namibia</text><text x="520" y="350" class="c">Madagascar</text><text x="188" y="373" class="c">Chile</text><text x="455" y="378" class="c">South Africa</text><text x="227" y="393" class="c">Uruguay</text><text x="771" y="183" class="c">Ja</text></g>
<g class="lt2"><text x="334" y="48" class="c">Iceland</text><text x="437" y="48" class="c">Sweden</text><text x="412" y="72" class="c">Norway</text><text x="662" y="67" class="c">Russia</text><text x="86" y="103" class="c">Canada</text><text x="380" y="103" class="c">United</text><text x="380" y="115" class="c">Kingdom</text><text x="467" y="113" class="c">Belarus</text><text x="395" y="139" class="c">France</text><text x="578" y="137" class="c">Kazakhstan</text><text x="375" y="165" class="c">Spain</text><text x="423" y="160" class="c">Italy</text><text x="555" y="173" class="c">Turkmenistan</text><text x="454" y="175" class="c">Greece</text><text x="677" y="185" class="c">China</text><text x="414" y="190" class="c">Tunisia</text><text x="511" y="194" class="c">Iraq</text><text x="541" y="196" class="c">Iran</text><text x="394" y="210" class="c">Algeria</text><text x="438" y="214" class="c">Libya</text><text x="472" y="215" class="c">Egypt</text><text x="579" y="210" class="c">Pakistan</text><text x="95" y="223" class="c">Mexico</text><text x="162" y="230" class="c">Cuba</text><text x="549" y="231" class="c">Oman</text><text x="643" y="222" class="c">Bangladesh</text><text x="345" y="250" class="c">Senegal</text><text x="384" y="243" class="c">Mali</text><text x="414" y="243" class="c">Niger</text><text x="472" y="254" class="c">Sudan</text><text x="522" y="248" class="c">Yemen</text><text x="685" y="258" class="c">Cambodia</text><text x="200" y="272" class="c">Venezuela</text><text x="410" y="266" class="c">Nigeria</text><text x="521" y="277" class="c">Somalia</text><text x="595" y="285" class="c">Maldives</text><text x="678" y="281" class="c">Malaysia</text><text x="164" y="297" class="c">Ecuador</text><text x="720" y="300" class="c">Indonesia</text><text x="174" y="323" class="c">Peru</text><text x="486" y="312" class="c">Tanzania</text><text x="438" y="329" class="c">Angola</text><text x="436" y="356" class="c">Namibia</text><text x="520" y="350" class="c">Madagascar</text><text x="188" y="373" class="c">Chile</text><text x="455" y="378" class="c">South Africa</text><text x="227" y="393" class="c">Uruguay</text><text x="771" y="183" class="c">Ja</text></g>
</g>
</svg>
   <div class="a" style="left:714px;top:383px;width:61px;height:17px;background:rgba(255,255,255,0.8)"></div>
   <div class="a" style="left:719px;top:388px;width:12px;height:4px;background:#4a70b8"></div>
   <div class="a" style="left:719px;top:392px;width:12px;height:4px;background:#f5cf3d"></div>
   <div class="a" style="left:734px;top:384px;font-size:12px;color:#2a78b0">Leaflet</div>
  </div>
  <div class="tile" style="left:890px;top:71px;width:159px;background:#f5f7fa"><div class="l">TOTAL CLUSTERS</div><div class="n" style="color:#383b42">0</div></div>
  <div class="tile" style="left:1097px;top:71px;background:#fdeef1"><div class="l">FAILED CLUSTERS</div><div class="n" style="color:#d9496d">0</div></div>
  <div class="tile" style="left:890px;top:254px;width:159px;background:#fef7f0"><div class="l">DEGRADED CLUSTERS</div><div class="n" style="color:#b8844f">0</div></div>
  <div class="tile" style="left:1097px;top:254px;background:#eff6fd"><div class="l">UPDATES PENDING</div><div class="n" style="color:#4aa5dc">0</div></div>
  <div class="a" style="left:1003px;top:440px;font-size:15px;color:#3d4350">View Clusters List</div>
  <svg class="a" style="left:1128px;top:441px" width="15" height="13" viewBox="0 0 15 13"><path d="M1 6.5 H13.2 M8.3 1.8 L13.2 6.5 L8.3 11.2" fill="none" stroke="#3d4350" stroke-width="1.7"/></svg>
 </div>
 <div class="card" style="left:244px;top:633px;width:1347px;height:240px">
  <div class="a" style="left:12px;top:7px;width:89px;height:32px;background:#4e5c6e;border-radius:2px 0 0 2px"></div>
  <div class="a" style="left:27px;top:16px;font-size:14px;color:#fff;font-weight:bold;letter-spacing:0.1px">Clusters</div>
  <div class="a" style="left:101px;top:7px;width:80px;height:32px;background:#e7e9ec;border-radius:0 3px 3px 0"></div>
  <div class="a" style="left:116px;top:15px;font-size:15px;color:#5c6373;letter-spacing:0.3px">Clouds</div>
  <div class="a" style="left:189px;top:7px;width:300px;height:32px;background:#e9ebee;border-radius:3px"></div>
  <div class="a" style="left:201px;top:15px;font-size:14.5px;color:#b8bcc4;letter-spacing:0.2px">Filter by clusters</div>
  <svg class="a" style="left:467px;top:20px" width="10" height="7" viewBox="0 0 10 7"><path d="M1 1 L5 5.5 L9 1" fill="none" stroke="#b8bcc4" stroke-width="1.1"/></svg>
  <div class="a" style="left:1197px;top:7px;width:138px;height:32px;background:#f7f8f9;border:1px solid #e3e5e8;border-radius:2px"></div>
  <div class="a" style="left:1213px;top:15px;font-size:15px;color:#545a66;letter-spacing:0.3px">Last 7 days</div>
  <svg class="a" style="left:1306px;top:21px" width="13" height="8" viewBox="0 0 13 8"><path d="M1 1 L6.5 6.5 L12 1" fill="none" stroke="#3d4350" stroke-width="1.6"/></svg>
  <div class="a" style="left:0;top:46px;width:1347px;height:1px;background:#eceef1"></div>
  <div class="a" style="left:24px;top:73px;font-size:17px;color:#555a66;letter-spacing:0.4px">Cumulative Clusters Costs</div>
  <div class="a" style="left:24px;top:103px;width:64px;height:1px;background:#dfe1e6"></div>
  <div class="a" style="left:49px;top:158px;font-size:10px;color:#666">$0.08</div>
  <div class="a" style="left:49px;top:195.5px;font-size:10px;color:#666">$0.06</div>
  <div class="a" style="left:78px;top:163px;width:6px;height:1.5px;background:#aaa"></div>
  <div class="a" style="left:78px;top:201px;width:6px;height:1.5px;background:#aaa"></div>
  <div class="a" style="left:85px;top:163px;width:1232px;height:0;border-top:1px dashed #d5d5d5"></div>
  <div class="a" style="left:85px;top:166px;width:1232px;height:100px;background:#d67abd"></div>
  <div class="a" style="left:17px;top:239px;font-size:12px;color:#666;transform:rotate(-90deg);transform-origin:left top">COST</div>
 </div>
 <div class="a" style="left:1555px;top:784px;width:48px;height:48px;border-radius:50%;background:#5b55b9;box-shadow:0 1px 4px rgba(0,0,0,0.2)">
  <svg class="a" style="left:12px;top:12px" width="24" height="24" viewBox="0 0 24 24"><g transform="rotate(-30 12 12)"><rect x="9.5" y="10.5" width="5.5" height="6.5" rx="1.5" fill="#e8eaf6"/><rect x="9.8" y="16.5" width="2.2" height="4" rx="0.8" fill="#e8eaf6"/><rect x="12.6" y="16.5" width="2.2" height="4" rx="0.8" fill="#e8eaf6"/><path d="M6 11.5 L9.6 12" stroke="#e8eaf6" stroke-width="1.8" stroke-linecap="round"/><circle cx="12.2" cy="7.5" r="3.6" fill="#e8eaf6"/><circle cx="12.5" cy="7.5" r="2.5" fill="#1a2a6e"/></g></svg>
 </div>
</div>
</body></html>
